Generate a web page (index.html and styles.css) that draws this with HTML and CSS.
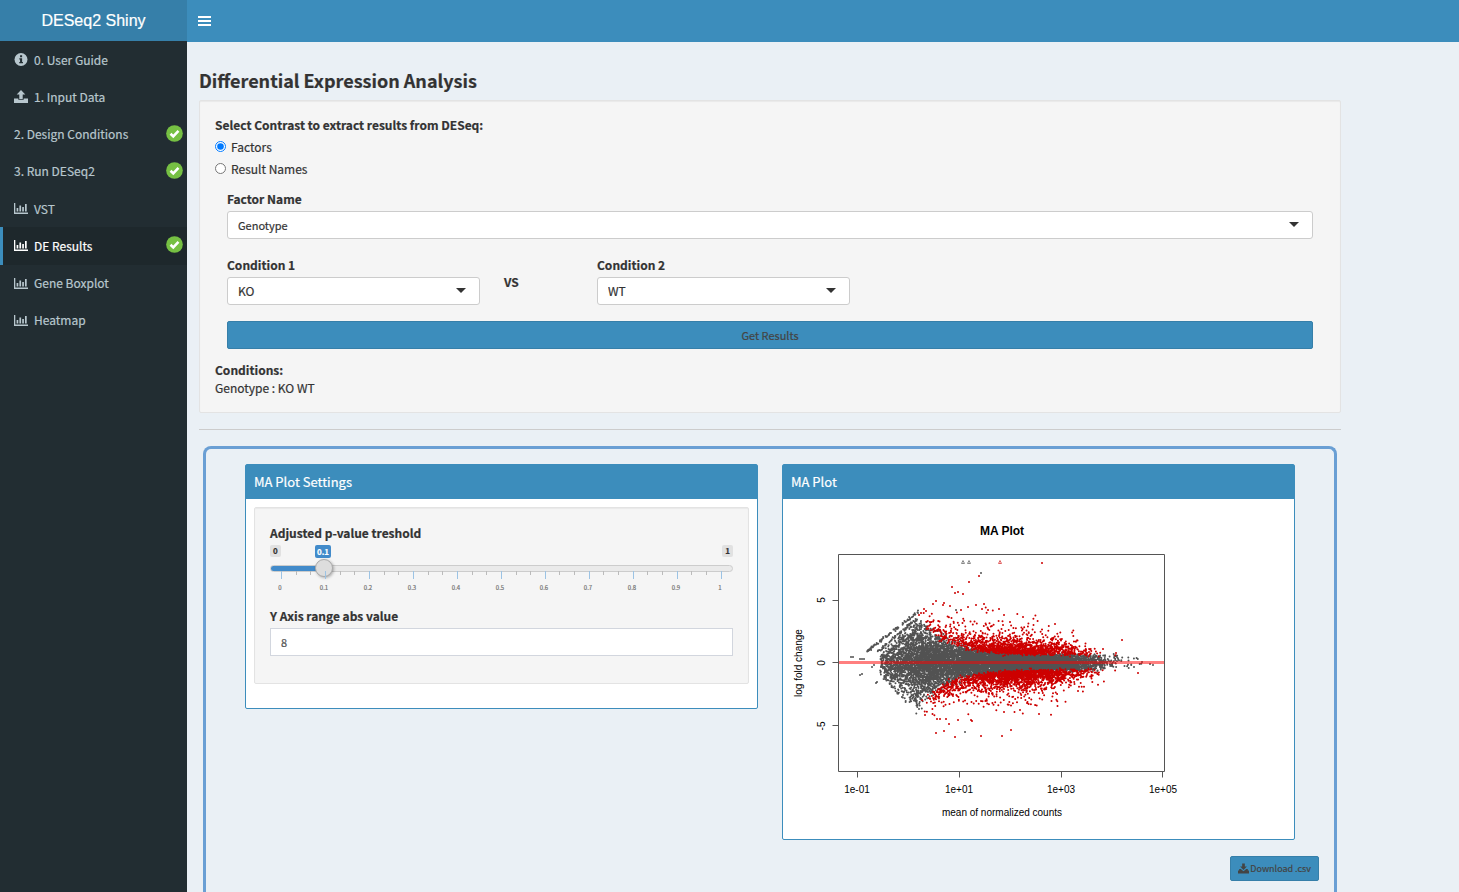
FILE: index.html
```html
<!DOCTYPE html>
<html lang="en">
<head>
<meta charset="utf-8">
<title>DESeq2 Shiny</title>
<link rel="stylesheet" href="styles.css">
</head>
<body>
<svg class="sprite" aria-hidden="true">
  <symbol id="i-info" viewBox="0 0 14 14"><circle cx="7" cy="7" r="7" fill="currentColor"/><path d="M6 2.500h2.200v2H6zM5.200 5.600h3v4h.9v1.500H5.100V9.600H6V7h-.8z" fill="#222d32"/></symbol>
  <symbol id="i-upload" viewBox="0 0 14 13"><path d="M7 0l4.300 4.500H8.700V9H5.300V4.500H2.700zM0 8.500h4.300v1.300h5.400V8.500H14V13H0z" fill="currentColor"/></symbol>
  <symbol id="i-download" viewBox="0 0 14 13"><path d="M5.300 0h3.400v4h2.600L7 8.300 2.700 4h2.600zM1.500 7h2l3.500 3 3.500-3h2v2H14v4H0V9h1.500z" fill="currentColor"/></symbol>
  <symbol id="i-chart" viewBox="0 0 14 11"><path d="M0 0h1.300v9.500H14V11H0zM2.600 5h1.700v3.600H2.600zM5.400 2.500h1.700v6.100H5.400zM8.200 4h1.700v4.600H8.200zM11 1h1.700v7.600H11z" fill="currentColor"/></symbol>
  <symbol id="i-check" viewBox="0 0 18 18"><circle cx="9" cy="9" r="8.800" fill="#76c043"/><path d="M4.800 9.300l2.900 2.800 5.500-5.800" fill="none" stroke="#fff" stroke-width="2.700"/></symbol>
</svg>

<div class="app">
  <aside class="sidebar">
    <div class="brand">DESeq2 Shiny</div>
    <nav class="menu">
      <a href="#guide"><svg class="ico"><use href="#i-info"/></svg><span>0. User Guide</span></a>
      <a href="#input"><svg class="ico"><use href="#i-upload"/></svg><span>1. Input Data</span></a>
      <a href="#design"><span>2. Design Conditions</span><svg class="done"><use href="#i-check"/></svg></a>
      <a href="#run"><span>3. Run DESeq2</span><svg class="done"><use href="#i-check"/></svg></a>
      <a href="#vst"><svg class="ico"><use href="#i-chart"/></svg><span>VST</span></a>
      <a href="#results" class="active"><svg class="ico"><use href="#i-chart"/></svg><span>DE Results</span><svg class="done"><use href="#i-check"/></svg></a>
      <a href="#boxplot"><svg class="ico"><use href="#i-chart"/></svg><span>Gene Boxplot</span></a>
      <a href="#heatmap"><svg class="ico"><use href="#i-chart"/></svg><span>Heatmap</span></a>
    </nav>
  </aside>

  <div class="main">
    <header class="topbar">
      <button class="toggle" type="button" aria-label="Toggle navigation"><i></i><i></i><i></i></button>
    </header>

    <main class="content">
      <h1>Differential Expression Analysis</h1>

      <section class="well contrast">
        <fieldset class="radios">
          <legend>Select Contrast to extract results from DESeq:</legend>
          <label><input type="radio" name="contrast" checked><span>Factors</span></label>
          <label><input type="radio" name="contrast"><span>Result Names</span></label>
        </fieldset>
        <div class="fields">
          <div class="field factor">
            <label for="factor">Factor Name</label>
            <div class="select"><select id="factor"><option>Genotype</option></select></div>
          </div>
          <div class="conditions">
            <div class="field">
              <label for="cond1">Condition 1</label>
              <div class="select"><select id="cond1"><option>KO</option></select></div>
            </div>
            <strong class="vs">VS</strong>
            <div class="field">
              <label for="cond2">Condition 2</label>
              <div class="select"><select id="cond2"><option>WT</option></select></div>
            </div>
          </div>
          <button class="btn get" type="button">Get Results</button>
        </div>
        <div class="summary"><strong>Conditions:</strong><span>Genotype : KO WT</span></div>
      </section>

      <hr>

      <section class="panel">
        <div class="boxes">
          <article class="box">
            <h2>MA Plot Settings</h2>
            <div class="box-body">
              <div class="well settings">
                <label for="pval">Adjusted p-value treshold</label>
                <div class="slider">
                  <div class="bubbles"><span>0</span><output class="current" for="pval">0.1</output><span>1</span></div>
                  <input id="pval" type="range" min="0" max="1" step="0.01" value="0.1">
                  <div class="ticks" id="ticks"></div>
                  <div class="scale"><span>0</span><span>0.1</span><span>0.2</span><span>0.3</span><span>0.4</span><span>0.5</span><span>0.6</span><span>0.7</span><span>0.8</span><span>0.9</span><span>1</span></div>
                </div>
                <label for="yrange">Y Axis range abs value</label>
                <input id="yrange" class="text" type="text" value="8">
              </div>
            </div>
          </article>

          <article class="box">
            <h2>MA Plot</h2>
            <div class="box-body">
              <svg class="plot" viewBox="791 507 400 324" role="img" aria-label="MA Plot">
                <path id="dots-grey" class="dots grey"/>
                <path id="dots-red" class="dots red"/>
                <path class="tri grey" d="M961.500 563.500l1.500-3 1.500 3zM967.500 563.500l1.500-3 1.500 3z"/>
                <path class="tri red" d="M998.500 563.500l1.500-3 1.500 3z"/>
                <path class="zero" d="M839 662.500H1165"/>
                <path class="axis" d="M838.500 554.500H1164.500V771.500H838.500zM832.500 600.500h6M832.500 662.500h6M832.500 725.500h6M857.500 771.500v6M959.500 771.500v6M1061.500 771.500v6M1162.500 771.500v6"/>
                <text class="title" x="1002" y="535">MA Plot</text>
                <g class="labels">
                  <text x="857" y="793">1e-01</text><text x="959" y="793">1e+01</text><text x="1061" y="793">1e+03</text><text x="1163" y="793">1e+05</text>
                  <text x="1002" y="816">mean of normalized counts</text>
                  <text transform="translate(825 600) rotate(-90)">5</text>
                  <text transform="translate(825 663) rotate(-90)">0</text>
                  <text transform="translate(825 726) rotate(-90)">-5</text>
                  <text transform="translate(802 663) rotate(-90)">log fold change</text>
                </g>
              </svg>
            </div>
          </article>
        </div>
        <div class="actions"><button class="btn csv" type="button"><svg><use href="#i-download"/></svg>Download .csv</button></div>
      </section>
    </main>
  </div>
</div>
<script src="plot.js"></script>
</body>
</html>
```

FILE: styles.css
```css
* { box-sizing: border-box; }

body {
  margin: 0;
  font-family: "Noto Sans CJK SC", "Noto Sans", sans-serif;
  font-size: 12px;
  line-height: 18px;
  color: #333;
  background: #eaf0f5;
  -webkit-text-stroke: .2px;
}

button, input, select { font: inherit; color: inherit; }

.sprite { position: absolute; width: 0; height: 0; }

.app { display: flex; min-height: 100vh; }

/* Sidebar */
.sidebar {
  flex: none;
  width: 187px;
  background: #222d32;
}
.brand {
  height: 41px;
  line-height: 41px;
  text-align: center;
  font-family: "Liberation Sans", Arial, sans-serif;
  font-size: 16px;
  color: #fff;
  background: #367fa9;
}
.menu {
  display: grid;
  grid-auto-rows: 1fr;
  min-height: 298px;
}
.menu a {
  display: flex;
  align-items: center;
  gap: 6px;
  padding: 0 4px 0 11px;
  border-left: 3px solid transparent;
  font-size: 12px;
  color: #b8c7ce;
  text-decoration: none;
}
.menu a.active {
  color: #fff;
  background: #1e282c;
  border-left-color: #3c8dbc;
}
.ico { width: 14px; height: 13px; }
.done { width: 17px; height: 17px; margin: 0 0 2px auto; }

/* Main column */
.main {
  flex: 1;
  min-width: 0;
  display: flex;
  flex-direction: column;
}
.topbar {
  display: flex;
  align-items: center;
  height: 42px;
  padding-left: 11px;
  background: #3c8dbc;
}
.toggle {
  display: grid;
  gap: 2px;
  padding: 0;
  border: 0;
  background: none;
}
.toggle i { width: 13px; height: 2px; background: #fff; }

.content {
  flex: 1;
  display: flex;
  flex-direction: column;
  width: 91.667%;
  padding: 26px 12px 0;
}
h1 {
  margin: 0 0 8px;
  font-size: 18px;
  line-height: 24px;
  font-weight: 700;
}
.well {
  border: 1px solid #e3e3e3;
  border-radius: 2px;
  background: #f5f5f5;
  box-shadow: inset 0 1px 1px rgba(0, 0, 0, .05);
}
.contrast { padding: 15px; }

.radios { margin: 0; padding: 0; border: 0; }
.radios legend { padding: 0; margin-bottom: 4px; font-weight: 700; }
.radios label {
  display: flex;
  align-items: center;
  gap: 5px;
  height: 18px;
  margin-bottom: 4px;
}
.radios input { width: 11px; height: 11px; margin: 0 0 2px; accent-color: #007aff; }

.fields { padding: 8px 12px 0; }
.field label { display: block; font-weight: 700; margin-bottom: 3px; }
.factor { margin-bottom: 17px; }
.factor select { font-size: 11px; }
.select { position: relative; }
.select::after {
  content: "";
  position: absolute;
  right: 14px;
  top: 11px;
  border: 5px solid transparent;
  border-top-color: #333;
  border-bottom: 0;
  pointer-events: none;
}
.select select {
  display: block;
  width: 100%;
  height: 28px;
  padding: 0 10px;
  border: 1px solid #ccc;
  border-radius: 3px;
  background: #fff;
  appearance: none;
}
.conditions {
  display: grid;
  grid-template-columns: 253px 117px 253px;
  margin-bottom: 16px;
}
.vs { padding: 17px 0 0 24px; }

.btn {
  border: 1px solid #367fa9;
  border-radius: 2px;
  background: #3c8dbc;
  color: #444;
  font-size: 11px;
}
.get { display: block; width: 100%; height: 28px; padding: 0; }
.summary { display: grid; padding-top: 12px; }

hr {
  width: 100%;
  margin: 16px 0;
  border: 0;
  border-top: 1px solid #ccc;
}

/* Results panel */
.panel {
  flex: 1;
  margin: 0 4px;
  padding: 15px 39px 0;
  border: 3px solid #6a9fd4;
  border-bottom: 0;
  border-radius: 8px 8px 0 0;
}
.boxes {
  display: grid;
  grid-template-columns: 1fr 1fr;
  gap: 24px;
  align-items: start;
}
.box {
  border: 1px solid #3c8dbc;
  border-radius: 2px;
  background: #fff;
}
.box h2 {
  margin: 0;
  padding: 8px;
  font-size: 13px;
  line-height: 18px;
  font-weight: 400;
  color: #fff;
  background: #3c8dbc;
}
.box-body { padding: 8px; }
.settings { padding: 16px 15px 27px; margin-bottom: 16px; }
.settings label { display: block; font-weight: 700; }
.text {
  width: 100%;
  height: 28px;
  margin-top: 3px;
  padding: 0 10px;
  border: 1px solid #d2d6de;
  background: #fff;
  font-size: 11px;
  color: #555;
}

.slider { margin-bottom: 13px; }
.bubbles {
  display: flex;
  justify-content: space-between;
  margin-top: 3px;
  position: relative;
  height: 14px;
}
.bubbles span, .current {
  height: 12px;
  padding: 0 3px;
  border-radius: 2px;
  background: #e1e1e1;
  font-size: 8px;
  line-height: 12px;
  font-weight: 700;
}
.current {
  position: absolute;
  left: 45px;
  height: 13px;
  padding: 0 2px;
  line-height: 13px;
  background: #428bca;
  color: #fff;
}
#pval {
  display: block;
  width: 100%;
  height: 18px;
  margin: 0;
  appearance: none;
  background: none;
}
#pval::-webkit-slider-runnable-track {
  height: 7px;
  border: 1px solid #ccc;
  border-radius: 4px;
  background: linear-gradient(90deg, #428bca 10%, #eaeaea 10%);
}
#pval::-webkit-slider-thumb {
  appearance: none;
  width: 18px;
  height: 18px;
  margin-top: -7px;
  border: 1px solid #aaa;
  border-radius: 50%;
  background: #ddd;
  box-shadow: 1px 1px 3px rgba(0, 0, 0, .3);
}
.ticks {
  display: flex;
  justify-content: space-between;
  height: 8px;
  margin-top: -6px;
  padding: 0 11px;
}
.ticks i { width: 1px; height: 4px; background: #bbb; }
.ticks i.major { height: 8px; background: #9cc3e4; }
.scale {
  display: flex;
  justify-content: space-between;
  margin-top: 3px;
  padding-right: 3px;
  font-size: 6px;
  line-height: 12px;
  color: #777;
}
.scale span { width: 20px; text-align: center; }

/* Plot */
.plot {
  display: block;
  width: 400px;
  max-width: 100%;
  height: 324px;
  font-family: "Liberation Sans", Arial, sans-serif;
  -webkit-text-stroke: 0;
}
.dots { fill: none; stroke-width: 2; stroke-linecap: round; }
.dots.grey { stroke: #525252; }
.dots.red { stroke: #cd0000; }
.tri { fill: none; stroke-width: 1; }
.tri.grey { stroke: #888; }
.tri.red { stroke: #e06060; }
.zero { stroke: #ff0000; stroke-opacity: .5; stroke-width: 3; }
.axis { fill: none; stroke: #555; stroke-width: 1; }
.title { font-size: 12px; font-weight: 700; text-anchor: middle; }
.labels { font-size: 10px; text-anchor: middle; }

.actions { display: flex; justify-content: flex-end; margin: 16px -24px 0 0; }
.csv {
  display: flex;
  align-items: center;
  gap: 1px;
  height: 25px;
  padding: 0 7px;
  font-size: 9px;
}
.csv svg { width: 11px; height: 11px; }
```

FILE: plot.js
```js
// Slider ticks: two minor marks between each pair of major ones.
const ticks = document.getElementById('ticks');
for (let i = 0; i <= 30; i++) {
  const t = document.createElement('i');
  if (i % 3 === 0) t.className = 'major';
  ticks.appendChild(t);
}

// Seeded generator, so that the plot is the same on every load.
let seed = 20201;
function rnd() {
  seed = (seed * 1664525 + 1013904223) % 4294967296;
  return (seed + 0.5) / 4294967296;
}
function gauss() {
  return Math.sqrt(-2 * Math.log(rnd())) * Math.cos(2 * Math.PI * rnd());
}

const ZERO = 662.5;
const grey = [];
const red = [];
const threshold = x => (x < 922 ? 999 : 8 + 38 * Math.exp(-(x - 922) / 28));
const envelope = x => Math.max(2, (x - 864) * 0.88);

function add(x, dy) {
  const cut = threshold(x) * (1 + 0.12 * gauss());
  (Math.abs(dy) > cut ? red : grey).push([x, ZERO + dy]);
}

// Low counts: wide fan bounded by the envelope.
for (let i = 0; i < 3500; i++) {
  const x = 927 + gauss() * 25;
  if (x < 880 || x > 990) continue;
  const sd = x < 915 ? 7 + (x - 880) * 0.36 : 20 * Math.exp(-(x - 915) / 80);
  const dy = gauss() * sd;
  if (Math.abs(dy) > Math.min(envelope(x), 52)) continue;
  add(x, dy);
}

// Mid and high counts: narrow core with long tails.
for (let i = 0; i < 8800; i++) {
  const x = 1020 + gauss() * 41;
  if (x < 925 || x > 1118) continue;
  if (x > 1085 && rnd() < (x - 1085) / 33) continue;
  const r = rnd();
  const base = x < 1060 ? 8.3 + 7 * Math.exp(-(x - 925) / 45) : Math.max(3.5, 8.6 - (x - 1060) * 0.11);
  const dy = gauss() * (r < 0.86 ? base : base * 1.9) + 0.5;
  if (Math.abs(dy) > 56) continue;
  add(x, dy);
}

// Significant genes outside the core, thinning out with distance.
for (let i = 0; i < 520; i++) {
  const x = 924 + Math.pow(rnd(), 0.8) * 115;
  const side = rnd() < 0.55 ? 1 : -1;
  const dy = threshold(x) * 0.9 - Math.log(rnd()) * (x < 950 ? 6 : 11);
  if (dy < 56) red.push([x, ZERO + side * dy]);
}
for (let i = 0; i < 110; i++) {
  const x = 1085 + Math.abs(gauss()) * 24;
  if (x < 1142) add(x, gauss() * 5 - 1);
}

// Discrete streaks of very low counts.
[[866, 652, 918, 612, 75], [877, 652, 918, 618, 55], [880, 660, 922, 626, 65], [884, 664, 922, 636, 50],
 [880, 672, 917, 715, 22], [884, 668, 920, 704, 30]].forEach(([x0, y0, x1, y1, n]) => {
  for (let i = 0; i < n; i++) {
    const t = rnd();
    grey.push([x0 + (x1 - x0) * t, y0 + (y1 - y0) * t + gauss() * 0.8]);
  }
});

grey.push([851, 657], [853, 657], [860, 659], [862, 659], [864, 659], [860, 675], [862, 674], [872, 667],
  [874, 665], [876, 683], [877, 682], [981, 573], [956, 610], [965, 732], [1142, 662], [1150, 664], [1153, 665], [1134, 667]);
red.push([1042, 563], [979, 576], [969, 582], [952, 587], [955, 593], [958, 592], [963, 594], [936, 601],
  [933, 604], [944, 603], [943, 605], [950, 606], [961, 610], [968, 607], [976, 605], [984, 604], [982, 609],
  [988, 610], [999, 609], [1004, 615], [1023, 617], [1055, 624], [1122, 640], [1010, 622], [924, 609],
  [926, 611], [921, 613], [919, 615], [936, 733], [944, 731], [955, 737], [981, 736], [1002, 736], [1011, 730],
  [1039, 714], [1020, 710], [1078, 691], [1027, 703], [971, 720], [972, 721], [1004, 712], [937, 719],
  [940, 719], [946, 719], [949, 724], [958, 720], [925, 715], [1138, 673], [1103, 649], [1116, 653]);

const path = pts => pts.map(([x, y]) => 'M' + x.toFixed(1) + ' ' + y.toFixed(1) + 'h.01').join('');
document.getElementById('dots-grey').setAttribute('d', path(grey));
document.getElementById('dots-red').setAttribute('d', path(red));
```
